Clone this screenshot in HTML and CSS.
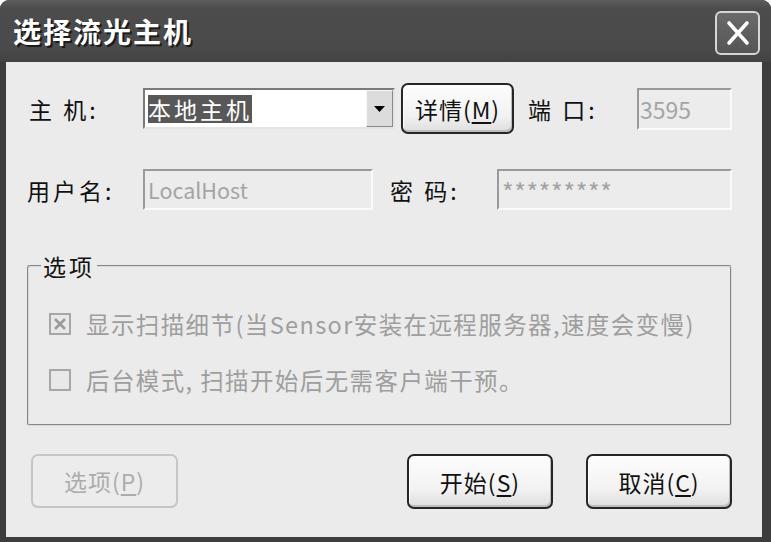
FILE: index.html
```html
<!DOCTYPE html>
<html lang="zh-CN">
<head>
<meta charset="utf-8">
<title>选择流光主机</title>
<link rel="stylesheet" href="styles.css">
</head>
<body>
<div class="window">
  <div class="titlebar">
    <span class="title">选择流光主机</span>
    <button class="close" aria-label="关闭">
      <svg width="24" height="26" viewBox="0 0 24 26"><path d="M3 3 L21 23 M21 3 L3 23" stroke="#fff" stroke-width="3.6" stroke-linecap="round" fill="none"/></svg>
    </button>
  </div>
  <div class="body">
    <div class="row row1">
      <span class="lbl lbl-host">主 机:</span>
      <div class="combo">
        <span class="sel">本地主机</span>
        <span class="combo-btn"><svg width="11" height="6" viewBox="0 0 11 6"><path d="M0 0 H11 L5.5 6 Z" fill="#000"/></svg></span>
      </div>
      <button class="btn btn-detail">详情(<u>M</u>)</button>
      <span class="lbl lbl-port">端 口:</span>
      <div class="field field-port">3595</div>
    </div>
    <div class="row row2">
      <span class="lbl lbl-user">用户名:</span>
      <div class="field field-user">LocalHost</div>
      <span class="lbl lbl-pass">密 码:</span>
      <div class="field field-pass">*********</div>
    </div>
    <fieldset class="group">
      <legend>选项</legend>
      <div class="check-row check-first">
        <span class="cb"><svg width="14" height="14" viewBox="0 0 14 14"><path d="M2 2 L12 12 M12 2 L2 12" stroke="#9a9a9a" stroke-width="2.6" fill="none"/></svg></span>
        <span class="cb-text">显示扫描细节(当Sensor安装在远程服务器,速度会变慢)</span>
      </div>
      <div class="check-row check-second">
        <span class="cb"></span>
        <span class="cb-text">后台模式, 扫描开始后无需客户端干预。</span>
      </div>
    </fieldset>
    <div class="buttons">
      <button class="btn btn-opt" disabled>选项(<u>P</u>)</button>
      <span class="spacer"></span>
      <button class="btn btn-start">开始(<u>S</u>)</button>
      <button class="btn btn-cancel">取消(<u>C</u>)</button>
    </div>
  </div>
</div>
</body>
</html>
```
FILE: styles.css
```css
* { box-sizing: border-box; }
html, body { margin: 0; padding: 0; }
body {
  background: #ffffff;
  width: 771px;
  height: 542px;
  overflow: hidden;
  font-family: "Noto Sans CJK SC", "Noto Sans", sans-serif;
  color: #111;
}
.window {
  width: 771px;
  height: 542px;
  display: flex;
  flex-direction: column;
  background: #3d3d3d;
  border-radius: 9px 9px 0 0;
  overflow: hidden;
}
.titlebar {
  height: 62px;
  flex: none;
  display: flex;
  align-items: center;
  justify-content: space-between;
  padding: 0 11px 0 13px;
  background: linear-gradient(#5c5c5c, #4c4c4c 14%, #4a4a4a 80%, #424242);
}
.title {
  color: #fff;
  font-size: 28px;
  font-weight: bold;
  letter-spacing: 2px;
  line-height: 1;
  text-shadow: 2px 2px 0 #1c1c1c;
}
.close {
  width: 45px;
  height: 44px;
  margin-top: 4px;
  padding: 0;
  border: 2px solid #d6d6d6;
  border-radius: 6px;
  background: linear-gradient(#6a6a6a, #555555);
  display: flex;
  align-items: center;
  justify-content: center;
}
.body {
  flex: 1;
  background: #ebebeb;
  margin: 0 9px 5px 6px;
  padding: 21px 30px 0 21px;
}
.row {
  display: flex;
  align-items: center;
}
.row1 { height: 51px; }
.row2 { height: 41px; margin-top: 35px; }
.lbl {
  font-size: 23px;
  letter-spacing: 3px;
  line-height: 30px;
  white-space: nowrap;
  flex: none;
}
.lbl-host { width: 116px; padding-left: 2px; }
.lbl-user { width: 116px; }
.lbl-port { width: 109px; margin-left: 14px; }
.lbl-pass { width: 107px; margin-left: 17px; }

.combo {
  width: 252px;
  height: 41px;
  flex: none;
  background: #fff;
  border: 2px solid;
  border-color: #7a7a7a #e4e4e4 #e4e4e4 #7a7a7a;
  display: flex;
  align-items: center;
  padding-left: 3px;
}
.sel {
  background: #585858;
  color: #fff;
  font-size: 23px;
  letter-spacing: 3px;
  line-height: 28px;
  height: 28px;
}
.combo-btn {
  margin-left: auto;
  width: 27px;
  height: 37px;
  background: #dcdcdc;
  border: 1px solid;
  border-color: #f8f8f8 #8a8a8a #8a8a8a #f8f8f8;
  display: flex;
  align-items: center;
  justify-content: center;
}
.field {
  flex: none;
  background: #ececec;
  border: 2px solid;
  border-color: #9a9a9a #fafafa #fafafa #9a9a9a;
  color: #a4a4a4;
  font-size: 21.5px;
  display: flex;
  align-items: center;
  padding-left: 3px;
  white-space: nowrap;
}
.field-port { width: 95px; height: 42px; padding-left: 1px; font-size: 23px; }
.field-user { width: 230px; height: 41px; }
.field-pass {
  width: 235px;
  height: 41px;
  font-size: 25px;
  letter-spacing: 0.6px;
  align-items: flex-start;
  padding-top: 2px;
}

.btn {
  flex: none;
  font-family: "Noto Sans CJK SC", "Noto Sans", sans-serif;
  font-size: 23px;
  letter-spacing: 1px;
  color: #111;
  border: 2px solid #262626;
  border-radius: 7px;
  background: linear-gradient(#fdfdfd, #f2f2f2 65%, #dedede);
  box-shadow: inset -1px -2px 0 #bcbcbc, inset 1px 1px 0 #ffffff;
  padding: 0;
  display: flex;
  align-items: center;
  justify-content: center;
}
.btn u { text-underline-offset: 3px; }
.btn-detail { width: 113px; height: 51px; margin-left: 6px; }

.group {
  margin: 44px 0 0 0;
  padding: 0 0 27px 0;
  border: 2px groove #dadada;
  border-radius: 3px;
  min-width: 0;
}
.group legend {
  margin-left: 12px;
  padding: 0 2px;
  font-size: 23px;
  line-height: 24px;
  letter-spacing: 3px;
  color: #111;
}
.check-row {
  display: flex;
  align-items: center;
  height: 34px;
  padding-left: 20px;
}
.check-first { margin-top: 29px; }
.check-second { margin-top: 22px; }
.cb {
  width: 22px;
  height: 22px;
  flex: none;
  border: 2px solid #a6a6a6;
  background: #e8e8e8;
  display: flex;
  align-items: center;
  justify-content: center;
}
.cb-text {
  margin-left: 15px;
  color: #9e9e9e;
  font-size: 23.5px;
  letter-spacing: 1.4px;
  white-space: nowrap;
}

.buttons {
  display: flex;
  height: 55px;
  margin-top: 28px;
  padding-left: 4px;
}
.spacer { flex: 1; }
.btn-opt { width: 147px; height: 54px; }
.btn-opt:disabled {
  border-color: #c6c6c6;
  color: #acacac;
  background: #ececec;
  box-shadow: none;
}
.btn-start { width: 146px; height: 55px; }
.btn-cancel { width: 146px; height: 55px; margin-left: 33px; }
```
